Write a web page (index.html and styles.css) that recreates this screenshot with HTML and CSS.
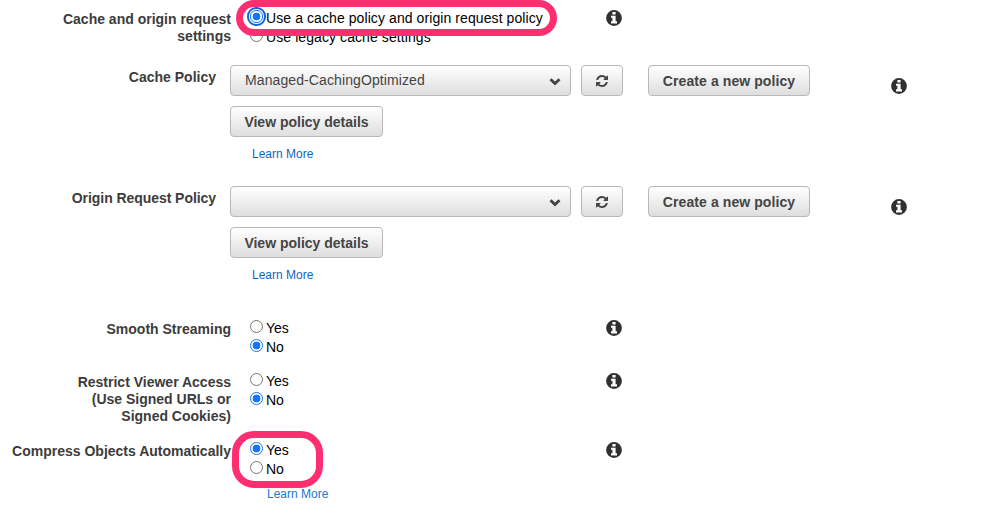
FILE: index.html
```html
<!DOCTYPE html>
<html lang="en">
<head>
<meta charset="utf-8">
<title>Cache behavior settings</title>
<link rel="stylesheet" href="styles.css">
</head>
<body>
<svg width="0" height="0" class="sprite" aria-hidden="true">
  <symbol id="info" viewBox="0 0 16 16">
    <circle cx="8" cy="8" r="7.9" fill="#303030"/>
    <path d="M6.400 1.900h3.200v2.600H6.400zM5 5.700h4.600v5.600H11v2.200H5v-2.200h1.400V7.800H5z" fill="#fff"/>
  </symbol>
  <symbol id="refresh" viewBox="0 0 1536 1536">
    <path fill="#444" d="M1511 928q0 5-1 7-64 268-268 434.500T764 1536q-146 0-282.500-55T238 1324l-129 129q-19 19-45 19t-45-19-19-45V960q0-26 19-45t45-19h448q26 0 45 19t19 45-19 45l-137 137q71 66 161 102t187 36q134 0 250-65t186-179q11-17 53-117 8-23 30-23h192q13 0 22.500 9.500t9.500 22.500zm25-800v448q0 26-19 45t-45 19h-448q-26 0-45-19t-19-45 19-45l138-138Q969 256 768 256q-134 0-250 65T332 500q-11 17-53 117-8 23-30 23H50q-13 0-22.500-9.500T18 608v-7q65-268 270-434.500T768 0q146 0 284 55.500T1297 212l130-129q19-19 45-19t45 19 19 45z"/>
  </symbol>
  <symbol id="chevron" viewBox="0 0 12 8">
    <path d="M1.500 1.300 6 5.500 10.500 1.300" fill="none" stroke="#444" stroke-width="2.900"/>
  </symbol>
</svg>
<main class="form">
  <section class="row origin">
    <div class="label">Cache and origin request<br>settings</div>
    <div class="options">
      <label class="option"><input type="radio" name="mode" class="focused" checked>Use a cache policy and origin request policy</label>
      <label class="option"><input type="radio" name="mode">Use legacy cache settings</label>
      <div class="mark mark-wide"></div>
    </div>
    <svg class="info"><use href="#info"/></svg>
  </section>

  <section class="row policy">
    <div class="label">Cache Policy</div>
    <div class="controls">
      <div class="line">
        <button class="btn select"><span>Managed-CachingOptimized</span><svg class="chevron"><use href="#chevron"/></svg></button>
        <button class="btn refresh" aria-label="Refresh"><svg><use href="#refresh"/></svg></button>
        <button class="btn create">Create a new policy</button>
      </div>
      <button class="btn view">View policy details</button>
      <a class="link">Learn More</a>
    </div>
    <svg class="info"><use href="#info"/></svg>
  </section>

  <section class="row policy policy-last">
    <div class="label">Origin Request Policy</div>
    <div class="controls">
      <div class="line">
        <button class="btn select"><span></span><svg class="chevron"><use href="#chevron"/></svg></button>
        <button class="btn refresh" aria-label="Refresh"><svg><use href="#refresh"/></svg></button>
        <button class="btn create">Create a new policy</button>
      </div>
      <button class="btn view">View policy details</button>
      <a class="link">Learn More</a>
    </div>
    <svg class="info"><use href="#info"/></svg>
  </section>

  <section class="row smooth">
    <div class="label">Smooth Streaming</div>
    <div class="options">
      <label class="option"><input type="radio" name="smooth">Yes</label>
      <label class="option"><input type="radio" name="smooth" checked>No</label>
    </div>
    <svg class="info"><use href="#info"/></svg>
  </section>

  <section class="row restrict">
    <div class="label">Restrict Viewer Access<br>(Use Signed URLs or<br>Signed Cookies)</div>
    <div class="options">
      <label class="option"><input type="radio" name="restrict">Yes</label>
      <label class="option"><input type="radio" name="restrict" checked>No</label>
    </div>
    <svg class="info"><use href="#info"/></svg>
  </section>

  <section class="row compress">
    <div class="label">Compress Objects Automatically</div>
    <div class="options">
      <label class="option"><input type="radio" name="compress" checked>Yes</label>
      <label class="option"><input type="radio" name="compress">No</label>
      <a class="link">Learn More</a>
      <div class="mark mark-small"></div>
    </div>
    <svg class="info"><use href="#info"/></svg>
  </section>
</main>
</body>
</html>
```
FILE: styles.css
```css
* { box-sizing: border-box; }
body {
  margin: 0;
  background: #fff;
  font: 14px/17px "Liberation Sans", Arial, sans-serif;
  color: #000;
  overflow: hidden;
}
.sprite { position: absolute; }
.form { width: 993px; }
.row {
  display: grid;
  grid-template-columns: 231px 375px 16px;
  align-items: start;
}
.origin { height: 65px; }
.origin .option { letter-spacing: 0.085px; }
.smooth { height: 53px; }
.restrict { height: 69px; }
.compress { height: 74px; }
.label {
  padding-top: 11px;
  text-align: right;
  font-weight: bold;
  color: #3c3c3c;
  white-space: nowrap;
}
.options {
  position: relative;
  padding: 9px 0 0 19px;
}
.option {
  display: flex;
  gap: 3px;
  height: 19px;
  line-height: 19px;
  white-space: nowrap;
}
input {
  appearance: none;
  flex: none;
  width: 13px;
  height: 13px;
  margin: 1px 0 0;
  border: 1px solid #767676;
  border-radius: 50%;
  background: #fff;
}
input:checked {
  border-color: #1576fb;
  background: radial-gradient(circle, #1576fb 3.600px, #fff 4.200px);
}
.focused {
  box-shadow: 0 0 0 1px #fff;
}
input.focused {
  outline: 2px solid #1864d1;
  outline-offset: 1px;
  border-radius: 6px;
}
.info {
  width: 16px;
  height: 16px;
  margin-top: 10px;
}
.mark {
  position: absolute;
  border: 7px solid #ff2e70;
}
.mark-wide {
  left: 5px;
  top: 0;
  width: 321px;
  height: 36px;
  border-radius: 18px;
}
.mark-small {
  left: 1px;
  top: -1px;
  width: 91px;
  height: 57px;
  border-radius: 22px;
}
.policy {
  grid-template-columns: 216px 675px 16px;
  height: 121px;
}
.policy-last { height: 124px; }
.policy .label { padding-top: 4px; }
.policy-last .label { letter-spacing: -0.06px; }
.policy .info { margin-top: 13px; }
.controls { padding-left: 14px; }
.line {
  display: flex;
  margin-bottom: 10px;
}
.btn {
  display: flex;
  align-items: center;
  justify-content: center;
  height: 31px;
  padding: 1px 0 0;
  border: 1px solid #b8b8b8;
  border-radius: 4px;
  background: linear-gradient(#fff, #dedede);
  font: bold 14px "Liberation Sans", Arial, sans-serif;
  color: #444;
  white-space: nowrap;
}
.select {
  justify-content: space-between;
  width: 341px;
  margin-right: 10px;
  padding: 0 9px 1px 14px;
  font-weight: normal;
  letter-spacing: 0.1px;
}
.chevron {
  width: 12px;
  height: 8px;
  margin-top: 4px;
}
.refresh {
  width: 42px;
  margin-right: 25px;
}
.refresh svg {
  width: 12px;
  height: 12px;
}
.create {
  width: 162px;
  letter-spacing: 0.09px;
}
.view { width: 153px; }
.link {
  display: block;
  width: max-content;
  margin: 9px 0 0 22px;
  font-size: 12px;
  line-height: 16px;
  color: #1166bb;
}
.compress .link {
  margin: 7px 0 0 17px;
  color: #2277cc;
}
```
